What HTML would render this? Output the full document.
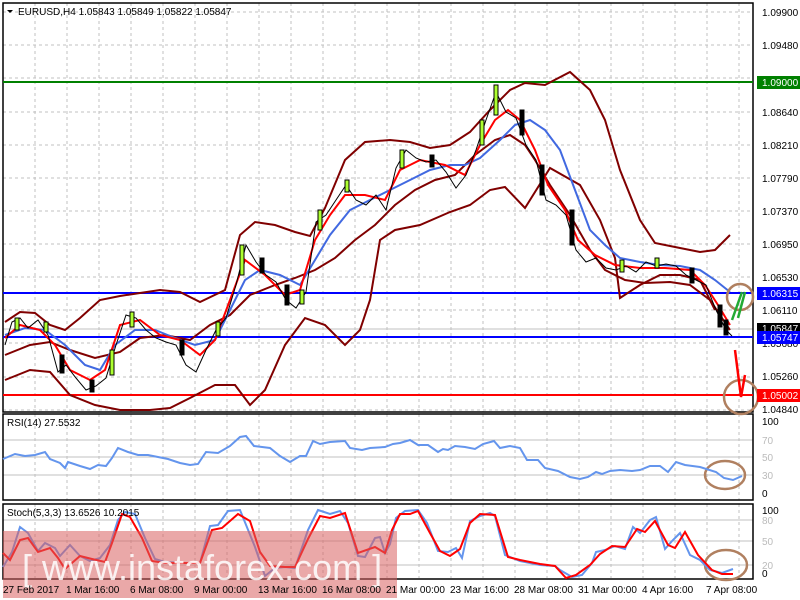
<!DOCTYPE html>
<html><head><meta charset="utf-8"><style>
html,body{margin:0;padding:0;background:#fff;width:800px;height:600px;overflow:hidden}
svg{display:block;font-family:"Liberation Sans",sans-serif}
</style></head><body>
<svg width="800" height="600" viewBox="0 0 800 600" xmlns="http://www.w3.org/2000/svg">
<rect width="800" height="600" fill="#fff"/>
<g stroke="#c0c0c0" stroke-dasharray="3,3" stroke-width="1">
<path d="M35 3V412M67 3V412M99 3V412M131 3V412M163 3V412M195 3V412M227 3V412M259 3V412M291 3V412M323 3V412M355 3V412M387 3V412M419 3V412M451 3V412M483 3V412M515 3V412M547 3V412M579 3V412M611 3V412M643 3V412M675 3V412M707 3V412M739 3V412"/>
<path d="M35 414V500M67 414V500M99 414V500M131 414V500M163 414V500M195 414V500M227 414V500M259 414V500M291 414V500M323 414V500M355 414V500M387 414V500M419 414V500M451 414V500M483 414V500M515 414V500M547 414V500M579 414V500M611 414V500M643 414V500M675 414V500M707 414V500M739 414V500"/>
<path d="M35 504V578M67 504V578M99 504V578M131 504V578M163 504V578M195 504V578M227 504V578M259 504V578M291 504V578M323 504V578M355 504V578M387 504V578M419 504V578M451 504V578M483 504V578M515 504V578M547 504V578M579 504V578M611 504V578M643 504V578M675 504V578M707 504V578M739 504V578"/>
<path d="M3 12H753M3 45H753M3 78H753M3 112H753M3 145H753M3 178H753M3 211H753M3 244H753M3 277H753M3 310H753M3 343H753M3 377H753M3 410H753"/>
</g>
<g stroke="#c0c0c0" stroke-width="1">
<path d="M3 440H753M3 457H753M3 475H753M3 520H753M3 541H753M3 565H753"/>
<path d="M3 329H753"/>
</g>
<g fill="none" stroke="#000" stroke-width="1.5">
<rect x="3" y="3" width="750" height="409"/>
<rect x="3" y="414" width="750" height="86"/>
<rect x="3" y="504" width="750" height="75"/>
</g>
<path d="M3 82H753" stroke="#008000" stroke-width="2"/>
<path d="M3 293H753" stroke="#0000ff" stroke-width="2"/>
<path d="M3 337H753" stroke="#0000ff" stroke-width="2"/>
<path d="M3 395H753" stroke="#ff0000" stroke-width="2"/>
<g fill="none" stroke="#800000" stroke-width="2">
<polyline points="5,322 20,312 35,313 50,325 65,330 80,318 100,300 120,296 140,293 160,290 180,292 200,302 225,290 240,235 255,222 275,225 295,232 310,236 325,208 345,160 365,142 390,140 410,142 430,148 450,145 470,132 490,110 510,90 525,83 545,85 570,72 590,90 605,120 620,170 640,220 655,243 675,247 700,252 715,250 730,235"/>
<polyline points="5,380 30,370 50,372 70,395 95,405 120,410 150,410 170,408 190,398 215,385 235,385 250,405 265,390 285,345 305,318 325,325 345,345 360,330 370,300 380,240 395,230 420,225 450,212 470,205 490,190 505,187 525,208 550,168 580,185 600,220 615,258 620,298 640,285 660,275 680,275 700,280 715,310"/>
<polyline points="5,355 30,345 50,342 70,350 95,358 120,352 140,338 165,335 190,340 210,325 230,315 250,295 275,285 295,278 315,270 335,258 355,240 375,225 395,205 415,190 435,180 455,175 475,155 495,140 510,135 525,145 535,160 550,185 570,215 590,250 605,270 625,280 645,283 670,282 690,285 710,300 730,330"/>
</g>
<polyline fill="none" stroke="#4169e1" stroke-width="2" points="5,335 25,328 45,330 65,345 85,365 100,370 115,345 135,330 155,330 175,338 195,345 215,340 230,310 245,280 260,270 280,275 300,285 315,260 330,235 350,210 370,200 390,190 410,180 430,170 450,165 465,165 480,158 500,140 515,125 530,120 545,130 560,150 575,190 590,230 605,245 620,258 640,262 660,265 680,266 700,270 715,280 730,292"/>
<polyline fill="none" stroke="#ff0000" stroke-width="2" points="5,338 20,325 40,330 55,345 70,370 90,380 105,370 120,325 140,320 160,335 180,340 200,355 215,340 230,300 245,260 265,275 285,295 300,290 315,240 330,215 345,195 365,195 385,200 400,170 420,160 445,165 465,175 480,145 495,120 508,110 520,120 535,150 548,185 565,210 578,240 595,255 615,265 640,268 665,268 690,270 705,285 718,305 730,325"/>
<g stroke="#000" stroke-width="1">
<polyline fill="none" points="5,345 12,322 20,318 28,328 38,320 48,335 58,372 66,365 76,378 86,390 96,386 106,378 116,345 126,315 136,318 146,330 156,338 166,342 176,345 186,365 196,372 206,350 216,330 226,318 236,285 246,245 256,262 266,275 276,282 286,300 296,308 306,292 316,222 326,215 336,200 346,185 356,200 366,205 376,195 386,210 396,168 406,150 416,158 426,162 436,160 446,172 456,188 466,175 476,150 486,120 496,92 506,112 516,118 526,145 536,160 546,200 556,205 566,215 576,250 586,262 596,258 606,268 616,270 626,266 636,272 646,262 656,266 666,264 676,266 686,275 696,280 706,285 716,310 726,330 732,336"/>
</g>
<g stroke="#000" stroke-width="1" fill="#adff2f">
<rect x="15" y="318" width="4" height="12"/><rect x="44" y="322" width="4" height="10"/><rect x="110" y="350" width="4" height="25"/><rect x="130" y="312" width="4" height="15"/><rect x="216" y="322" width="4" height="14"/><rect x="240" y="245" width="4" height="30"/><rect x="300" y="290" width="4" height="14"/><rect x="318" y="210" width="4" height="20"/><rect x="345" y="180" width="4" height="12"/><rect x="400" y="150" width="4" height="18"/><rect x="480" y="120" width="4" height="25"/><rect x="494" y="85" width="4" height="30"/><rect x="620" y="260" width="4" height="12"/><rect x="655" y="258" width="4" height="10"/>
</g>
<g stroke="#000" stroke-width="1" fill="#000">
<rect x="60" y="355" width="4" height="18"/><rect x="90" y="380" width="4" height="12"/><rect x="180" y="340" width="4" height="15"/><rect x="260" y="258" width="4" height="15"/><rect x="285" y="285" width="4" height="20"/><rect x="430" y="155" width="4" height="12"/><rect x="520" y="110" width="4" height="25"/><rect x="540" y="165" width="4" height="30"/><rect x="570" y="210" width="4" height="35"/><rect x="690" y="268" width="4" height="15"/><rect x="718" y="305" width="4" height="22"/><rect x="724" y="320" width="4" height="15"/>
</g>
<g fill="none" stroke="#b08060" stroke-width="2.5">
<circle cx="740" cy="297" r="13"/>
<circle cx="741" cy="397" r="17"/>
<ellipse cx="725" cy="475" rx="20" ry="14"/>
<ellipse cx="726" cy="565" rx="21" ry="15"/>
</g>
<path d="M732 320L742 292M738 318L745 292" stroke="#22aa33" stroke-width="2.5" fill="none"/>
<path d="M735 350L741 397L745 375" stroke="#ff0000" stroke-width="2.5" fill="none"/>
<polyline fill="none" stroke="#6495ed" stroke-width="2" points="3,459 15,454 25,456 35,455 45,452 50,459 60,463 65,468 68,462 80,466 90,469 98,465 106,466 112,458 118,448 128,452 138,455 148,455 158,457 168,459 180,463 190,465 198,464 206,452 218,453 230,446 240,437 246,436 254,446 270,448 280,456 290,462 300,456 306,456 313,441 320,444 330,442 345,441 350,448 362,450 370,448 385,447 393,444 400,443 410,440 418,445 428,445 438,452 443,449 448,450 455,446 465,447 475,449 483,444 494,441 500,448 510,446 520,448 527,460 538,460 545,468 558,471 570,477 580,479 588,477 596,472 602,474 610,471 620,470 632,471 640,470 650,466 660,466 668,472 676,462 685,465 700,467 716,472 724,478 733,480 742,476"/>
<polyline fill="none" stroke="#6495ed" stroke-width="2" points="3,567 12,552 20,527 28,533 38,551 45,543 55,548 60,556 70,545 80,556 90,561 100,558 110,545 118,520 125,512 135,514 145,538 155,559 165,562 185,563 200,563 210,526 218,525 228,511 240,510 255,547 265,576 275,568 285,567 295,568 308,530 318,510 330,514 340,511 348,523 358,556 365,557 375,538 380,537 385,553 390,544 396,518 405,511 418,510 427,523 438,551 448,552 456,548 462,558 470,521 480,516 490,513 495,516 505,555 520,561 540,565 555,566 560,570 572,577 582,575 592,563 596,552 605,550 615,546 625,549 633,527 640,533 650,520 656,517 665,549 672,541 680,533 690,555 700,560 710,570 722,573 733,569"/>
<polyline fill="none" stroke="#ff0000" stroke-width="2" points="3,553 10,560 20,540 28,538 38,552 50,548 58,558 65,569 80,556 92,559 105,562 112,543 122,514 130,517 142,538 152,561 165,563 185,563 200,563 212,530 222,528 238,514 250,521 260,552 270,566 285,567 295,567 308,539 320,516 330,518 345,513 358,553 375,547 385,553 392,530 400,514 410,514 418,511 430,533 440,551 450,556 460,549 470,523 480,514 495,515 508,557 520,560 540,564 555,566 566,578 576,575 590,565 600,554 612,546 625,547 637,529 645,532 655,521 668,545 675,548 685,532 698,555 712,570 722,574 733,574"/>
<rect x="3" y="531" width="394" height="67" fill="#d86060" opacity="0.55"/>
<text x="22" y="580" font-size="36" fill="#fff" opacity="0.85">[ www.instaforex.com ]</text>
<path d="M7 10L13 10L10 13Z" fill="#000"/>
<text x="18" y="15" font-size="10" fill="#000">EURUSD,H4  1.05843 1.05849 1.05822 1.05847</text>
<text x="7" y="426" font-size="10" fill="#000">RSI(14) 27.5532</text>
<text x="7" y="516" font-size="10" fill="#000">Stoch(5,3,3) 13.6526 10.2015</text>
<g font-size="10" fill="#000">
<text x="762" y="16">1.09900</text><text x="762" y="49">1.09480</text><text x="762" y="116">1.08640</text><text x="762" y="149">1.08210</text><text x="762" y="182">1.07790</text><text x="762" y="215">1.07370</text><text x="762" y="248">1.06950</text><text x="762" y="281">1.06530</text><text x="762" y="314">1.06110</text><text x="762" y="347">1.05680</text><text x="762" y="380">1.05260</text><text x="762" y="413">1.04840</text>
<text x="762" y="425">100</text><text x="762" y="497">0</text><text x="762" y="514">100</text>
</g>
<g font-size="10" fill="#bbb">
<text x="762" y="444">70</text><text x="762" y="461">50</text><text x="762" y="479">30</text><text x="762" y="524">80</text><text x="762" y="545">50</text><text x="762" y="569">20</text>
</g>
<text x="762" y="577" font-size="10" fill="#000">0</text>
<rect x="757" y="76" width="43" height="13" fill="#008000"/><text x="762" y="86" font-size="10" fill="#fff">1.09000</text>
<rect x="757" y="287" width="43" height="13" fill="#0000ff"/><text x="762" y="297" font-size="10" fill="#fff">1.06315</text>
<rect x="757" y="323" width="43" height="12" fill="#000"/><text x="762" y="332" font-size="10" fill="#fff">1.05847</text>
<rect x="757" y="331" width="43" height="13" fill="#0000ff"/><text x="762" y="341" font-size="10" fill="#fff">1.05747</text>
<rect x="757" y="389" width="43" height="13" fill="#ff0000"/><text x="762" y="399" font-size="10" fill="#fff">1.05002</text>
<g font-size="10" fill="#000">
<text x="3" y="593">27 Feb 2017</text><text x="66" y="593">1 Mar 16:00</text><text x="130" y="593">6 Mar 08:00</text><text x="194" y="593">9 Mar 00:00</text><text x="258" y="593">13 Mar 16:00</text><text x="322" y="593">16 Mar 08:00</text><text x="386" y="593">21 Mar 00:00</text><text x="450" y="593">23 Mar 16:00</text><text x="514" y="593">28 Mar 08:00</text><text x="578" y="593">31 Mar 00:00</text><text x="642" y="593">4 Apr 16:00</text><text x="706" y="593">7 Apr 08:00</text>
</g>
</svg>
</body></html>
